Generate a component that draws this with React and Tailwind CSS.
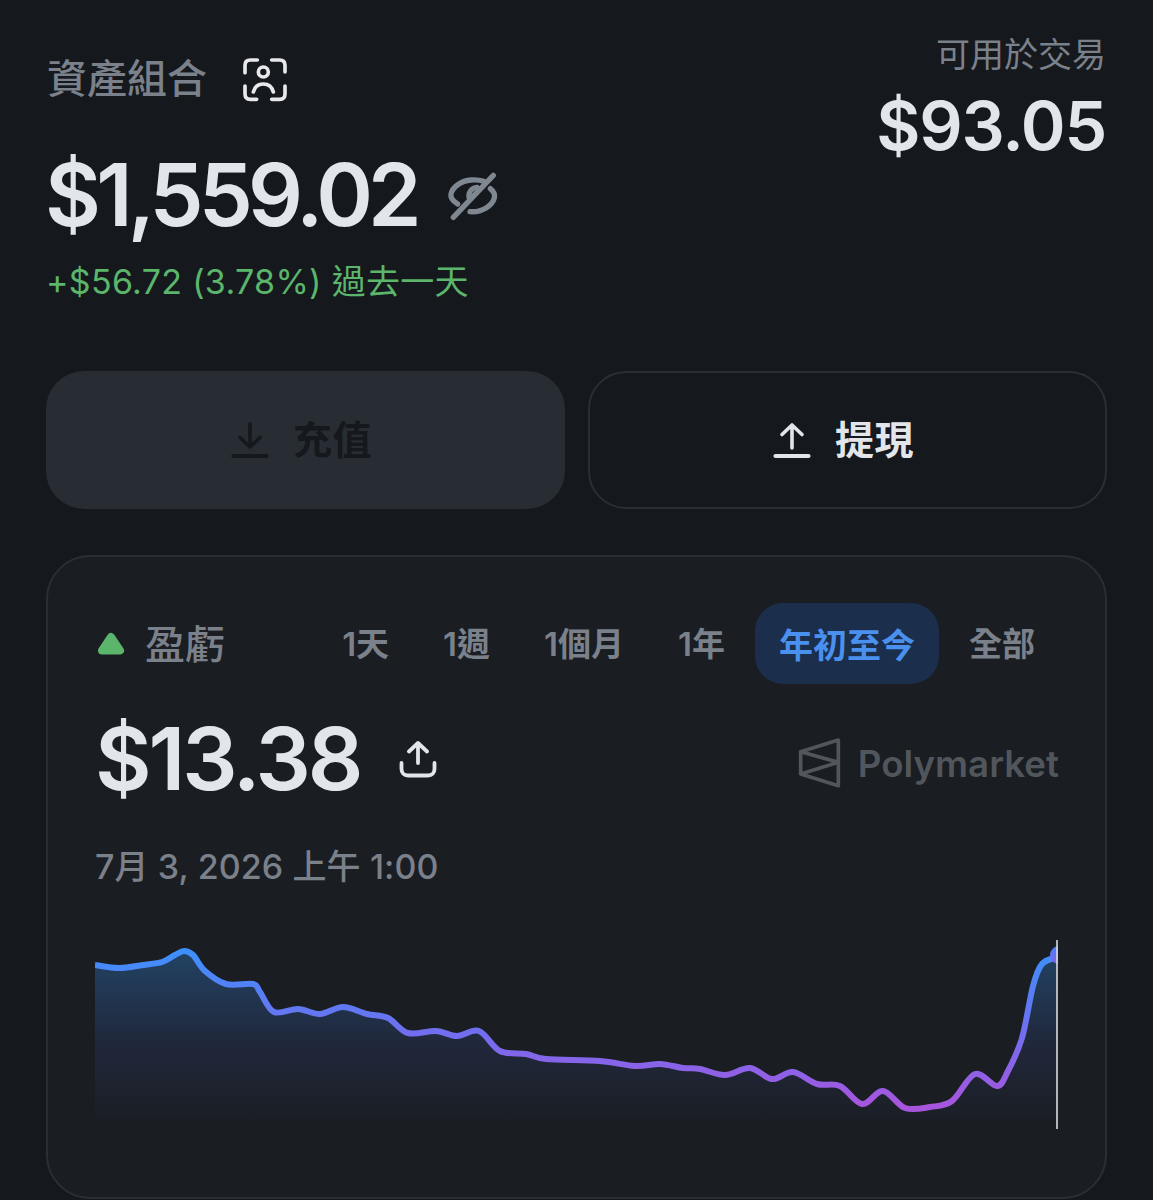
import React from "react";

const pts = [[95,964],[119,967],[143,964],[162,961],[175,954],[184,950],[193,954],[205,970],[226,983],[253,983],[260,991],[274,1011],[298,1008],[320,1013],[343,1006],[367,1013],[388,1017],[408,1032],[436,1030],[457,1035],[479,1030],[500,1050],[526,1053],[546,1058],[600,1060],[635,1065],[660,1063],[683,1067],[700,1068],[725,1074],[750,1067],[772,1078],[793,1071],[817,1083],[840,1085],[862,1103],[883,1090],[905,1107],[930,1106],[952,1100],[975,1073],[997,1085],[1008,1070],[1022,1037],[1033,985],[1042,963],[1057,956]];

function smooth(p) {
  let d = `M${p[0][0]} ${p[0][1]}`;
  for (let i = 0; i < p.length - 1; i++) {
    const a = p[Math.max(i - 1, 0)], b = p[i], c = p[i + 1], e = p[Math.min(i + 2, p.length - 1)];
    const k = 6;
    d += ` C${(b[0] + (c[0] - a[0]) / k).toFixed(1)} ${(b[1] + (c[1] - a[1]) / k).toFixed(1)} ${(c[0] - (e[0] - b[0]) / k).toFixed(1)} ${(c[1] - (e[1] - b[1]) / k).toFixed(1)} ${c[0]} ${c[1]}`;
  }
  return d;
}
const line = smooth(pts);
const area = `${line} L1057 1128 L95 1128 Z`;

const tabs = ["1天", "1週", "1個月", "1年", "年初至今", "全部"];

function ArrowIcon({ down, color, className }) {
  return (
    <svg viewBox="0 0 38 38" className={className} fill="none" stroke={color} strokeLinecap="round" strokeLinejoin="round">
      <path d="M2.5 35H35.5" strokeWidth="4.2" />
      {down ? (
        <path d="M19 3V26M9 16.5L19 26L29 16.5" strokeWidth="3.6" />
      ) : (
        <path d="M19 27V4M9 13.5L19 4L29 13.5" strokeWidth="3.6" />
      )}
    </svg>
  );
}

export default function App() {
  return (
    <div className="w-[1153px] h-[1200px] overflow-hidden bg-[#15181d] px-[47px] font-['Inter','Noto_Sans_CJK_TC',sans-serif]">
      <div className="flex justify-between items-start">
        <div>
          <div className="flex items-center mt-[54px] h-[48px]">
            <span className="text-[40px] leading-[48px] pt-[2px] font-medium text-[#7b818b]">資產組合</span>
            <svg viewBox="0 0 210 195" className="w-[70px] h-[65px] ml-[23px] shrink-0" fill="none" stroke="#e6e8ec" strokeWidth="11" strokeLinecap="round">
              <path d="M45 80V58C45 48 51 42 61 42H82M125 42H149C159 42 165 48 165 58V78M165 120V144C165 154 159 160 149 160H125M80 160H61C51 160 45 154 45 144V120" />
              <circle cx="100" cy="78" r="15" />
              <path d="M70 138C74 122 86 114 100 114C114 114 126 122 130 138" />
            </svg>
          </div>
          <div className="flex items-center mt-[51px] h-[84px] -ml-[2px]">
            <span className="text-[86px] leading-[84px] font-semibold text-[#e2e5ea] tracking-[-4.8px]">$1,559.02</span>
            <svg viewBox="0 0 240 210" className="w-[80px] h-[70px] ml-[18px] shrink-0" fill="none" stroke="#7f8791" strokeWidth="16" strokeLinecap="round" strokeLinejoin="round">
              <path d="M68 132C52 122 46 112 48 102C52 82 78 62 108 60C122 59 135 60 146 64" />
              <path d="M166 86C176 94 181 104 178 114C172 136 142 158 105 155" />
              <path d="M102 112C100 96 110 84 126 82" />
              <path d="M55 172L175 46" />
            </svg>
          </div>
          <div className="mt-[26px] -ml-[1px] h-[38px] text-[34px] leading-[38px] text-[#5bb56a] tracking-[0.3px] whitespace-nowrap">+$56.72 (3.78%) 過去一天</div>
        </div>
        <div className="flex flex-col items-end mt-[33px]">
          <span className="text-[34px] leading-[44px] text-[#7b818b]">可用於交易</span>
          <span className="mt-[8px] text-[68px] leading-[80px] font-semibold text-[#e2e5ea] tracking-[-1.2px]">$93.05</span>
        </div>
      </div>

      <div className="flex gap-[23px] mt-[70px] -mx-px">
        <div className="w-[519px] h-[138px] rounded-[38px] bg-[#282c33] flex items-center justify-center gap-[24px] pr-[8px]">
          <ArrowIcon down color="#15181d" className="w-[38px] h-[38px]" />
          <span className="text-[39px] font-bold text-[#15181d] tracking-[0.5px]">充值</span>
        </div>
        <div className="w-[519px] h-[138px] rounded-[38px] border-2 border-[#2a2e35] flex items-center justify-center gap-[24px] pr-[8px]">
          <ArrowIcon color="#e2e5ea" className="w-[38px] h-[38px]" />
          <span className="text-[39px] font-bold text-[#e2e5ea] tracking-[0.5px]">提現</span>
        </div>
      </div>

      <div className="mt-[46px] -mx-px h-[644px] rounded-[44px] border-2 border-[#2a2e35] bg-[#1a1d22] pl-[47px] pr-[46px] pt-[46px]">
        <div className="flex items-center justify-between h-[81px]">
          <div className="flex items-center">
            <svg viewBox="0 0 28 24" className="w-[28px] h-[24px] ml-[2px] -mt-[1px]">
              <path d="M14 6L23 19.5H5Z" fill="#5bb56a" stroke="#5bb56a" strokeWidth="8" strokeLinejoin="round" />
            </svg>
            <span className="ml-[20px] pt-[3px] text-[40px] font-medium text-[#7b818b]">盈虧</span>
          </div>
          <div className="flex items-center gap-[6px]">
            {tabs.map((t) => (
              <div
                key={t}
                className={
                  t === "年初至今"
                    ? "h-[81px] px-[24px] pt-[3px] flex items-center rounded-[28px] bg-[#1b2e4b] text-[#4a90ee] text-[34px] font-semibold"
                    : "h-[81px] px-[24px] pt-[3px] flex items-center text-[#7b818b] text-[33px] font-semibold"
                }
              >
                {t}
              </div>
            ))}
          </div>
        </div>

        <div className="flex items-center justify-between mt-[33px] h-[84px]">
          <div className="flex items-center">
            <span className="text-[87px] leading-[84px] font-semibold text-[#e2e5ea] tracking-[-3px]">$13.38</span>
            <svg viewBox="0 0 38 38" className="w-[38px] h-[38px] ml-[38px]" fill="none" stroke="#e2e5ea" strokeWidth="3.8" strokeLinecap="round" strokeLinejoin="round">
              <path d="M19 23V3M10 11.5L19 3L28 11.5" />
              <path d="M2.5 23V29C2.5 33 5 35.5 9 35.5H29C33 35.5 35.5 33 35.5 29V23" />
            </svg>
          </div>
          <div className="flex items-center mt-[10px]">
            <svg viewBox="0 0 210 210" className="w-[70px] h-[70px] shrink-0" fill="none" stroke="#51565d" strokeWidth="11" strokeLinejoin="round">
              <path d="M145 33L32 68L145 100L32 135L145 170Z" />
              <path d="M32 68V135" />
            </svg>
            <span className="-ml-[2px] text-[36.7px] font-semibold text-[#51565d]">Polymarket</span>
          </div>
        </div>

        <div className="mt-[44px] text-[34px] leading-[44px] font-medium text-[#7b818b] tracking-[0.1px]">7月 3, 2026 上午 1:00</div>

        <svg viewBox="95 930 970 205" className="block w-[970px] h-[205px] mt-[42px]">
          <defs>
            <linearGradient id="st" gradientUnits="userSpaceOnUse" x1="0" y1="950" x2="0" y2="1107">
              <stop offset="0" stopColor="#3d90fb" />
              <stop offset="0.5" stopColor="#6f6ff0" />
              <stop offset="1" stopColor="#a855dd" />
            </linearGradient>
            <linearGradient id="ar" gradientUnits="userSpaceOnUse" x1="0" y1="950" x2="0" y2="1128">
              <stop offset="0" stopColor="#224364" />
              <stop offset="0.5" stopColor="#20283c" />
              <stop offset="1" stopColor="#1a1d22" />
            </linearGradient>
            <linearGradient id="dt" x1="0" y1="0" x2="0" y2="1">
              <stop offset="0" stopColor="#3f82fb" />
              <stop offset="1" stopColor="#8a5fe8" />
            </linearGradient>
            <clipPath id="dotclip"><rect x="1040" y="930" width="18" height="50" /></clipPath>
          </defs>
          <path d={area} fill="url(#ar)" />
          <path d={line} fill="none" stroke="url(#st)" strokeWidth="6" strokeLinejoin="round" />
          <g clipPath="url(#dotclip)">
            <circle cx="1059" cy="954" r="9" fill="url(#dt)" />
          </g>
          <path d="M1057 939V1128" stroke="#d9dbdf" strokeWidth="1.6" />
        </svg>
      </div>
    </div>
  );
}
